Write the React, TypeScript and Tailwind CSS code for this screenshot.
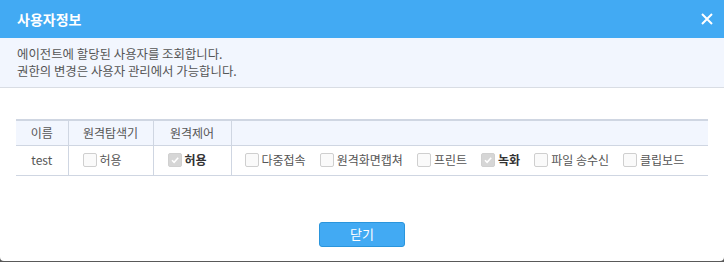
import React from 'react';

const font = { fontFamily: '"Noto Sans CJK KR", "Noto Sans", sans-serif' };

function Check({ checked, label }: { checked?: boolean; label: string }) {
  return (
    <label className="flex items-center gap-[3px]">
      {checked ? (
        <span className="flex h-[14px] w-[14px] items-center justify-center rounded-[2px] border border-[#d0d0d0] bg-[#d6d6d6]">
          <svg width="10" height="10" viewBox="0 0 10 10">
            <path d="M2 5.2 L4.1 7.3 L8.2 2.8" fill="none" stroke="#fff" strokeWidth="1.6" />
          </svg>
        </span>
      ) : (
        <span className="h-[14px] w-[14px] rounded-[2px] border border-[#cfcfcf] bg-[#fafafa]" />
      )}
      <span className={checked ? 'font-bold text-[#333]' : 'text-[#555]'}>{label}</span>
    </label>
  );
}

export default function App() {
  const perms: [string, boolean][] = [
    ['다중접속', false],
    ['원격화면캡쳐', false],
    ['프린트', false],
    ['녹화', true],
    ['파일 송수신', false],
    ['클립보드', false],
  ];

  return (
    <div className="h-[262px] w-[724px] bg-[#595959]" style={font}>
      <div className="flex h-[261px] flex-col overflow-hidden rounded-b-[4px] bg-white">
        {/* Header */}
        <div className="flex h-[38px] items-center justify-between bg-[#42aaf3] pl-[17px] pr-[10px]">
          <span className="text-[14px] font-bold text-white">사용자정보</span>
          <svg width="14" height="14" viewBox="0 0 14 14">
            <path d="M2 2 L12 12 M12 2 L2 12" stroke="#fff" strokeWidth="2" />
          </svg>
        </div>

        {/* Info */}
        <div className="h-[50px] border-b border-[#d9dde4] bg-[#f2f6fe] px-[17px] pt-[8px] text-[12.4px] leading-[17px] text-[#555]">
          <p>에이전트에 할당된 사용자를 조회합니다.</p>
          <p>권한의 변경은 사용자 관리에서 가능합니다.</p>
        </div>

        {/* Table */}
        <div className="px-[16px] pt-[31px]">
          <table className="w-[692px] border-collapse border-t-2 border-[#cfd6e2] text-[12px] text-[#555]">
            <thead>
              <tr className="h-[25px] border-b border-[#cfd6e2] bg-[#f2f6fe]">
                <th className="w-[52px] border-r border-[#cfd6e2] font-normal">이름</th>
                <th className="w-[85px] border-r border-[#cfd6e2] font-normal">원격탐색기</th>
                <th className="w-[78px] border-r border-[#cfd6e2] font-normal">원격제어</th>
                <th className="font-normal"></th>
              </tr>
            </thead>
            <tbody>
              <tr className="h-[30px] border-b border-[#cfd6e2]">
                <td className="border-r border-[#cfd6e2] text-center">test</td>
                <td className="border-r border-[#cfd6e2] pl-[14px]">
                  <Check label="허용" />
                </td>
                <td className="border-r border-[#cfd6e2] pl-[14px]">
                  <Check checked label="허용" />
                </td>
                <td className="pl-[13px]">
                  <div className="flex items-center gap-[14px]">
                    {perms.map(([l, c]) => (
                      <Check key={l} label={l} checked={c} />
                    ))}
                  </div>
                </td>
              </tr>
            </tbody>
          </table>
        </div>

        {/* Footer */}
        <div className="flex justify-center pt-[46px]">
          <button className="h-[25px] w-[86px] rounded-[3px] border border-[#2a95dc] bg-[#42aaf3] text-[13px] text-white">
            닫기
          </button>
        </div>
      </div>
    </div>
  );
}
